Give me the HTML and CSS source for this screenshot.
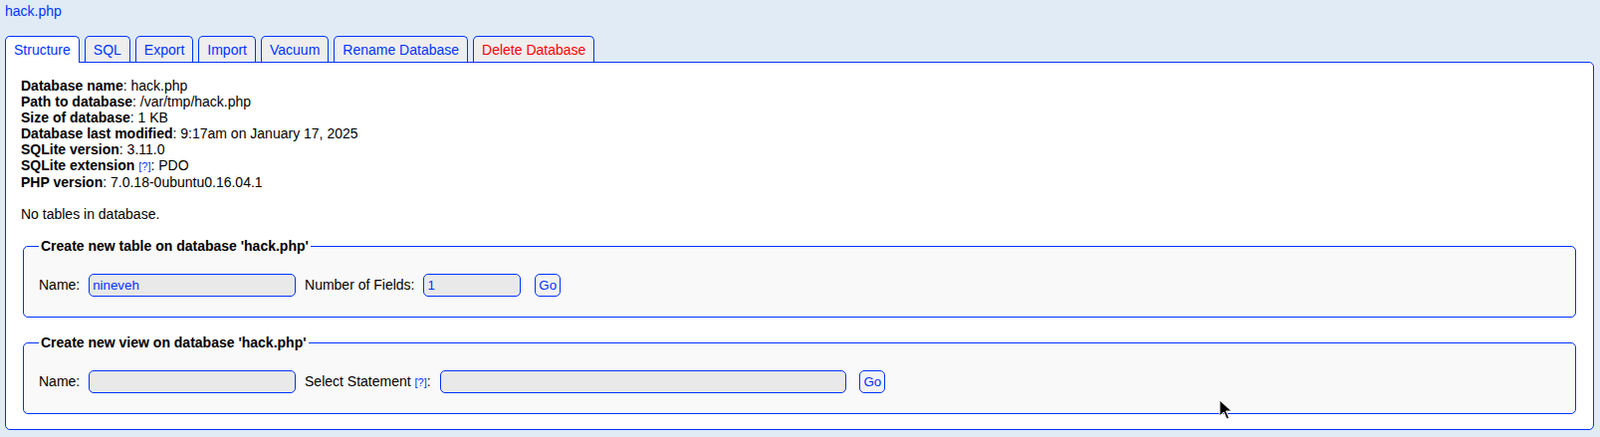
FILE: index.html
```
<!DOCTYPE html>
<html>
<head>
<meta charset="utf-8">
<title>hack.php</title>
<link rel="stylesheet" href="styles.css">
</head>
<body>
<div class="container">
  <div class="header"><a href="#">hack.php</a></div>
  <div class="tabs">
    <a class="tab tab-pressed" href="#">Structure</a>
    <a class="tab" href="#">SQL</a>
    <a class="tab" href="#">Export</a>
    <a class="tab" href="#">Import</a>
    <a class="tab" href="#">Vacuum</a>
    <a class="tab" href="#">Rename Database</a>
    <a class="tab tab-warning" href="#">Delete Database</a>
  </div>
  <div class="main">
    <div class="info">
      <b>Database name</b>: hack.php<br>
      <b>Path to database</b>: /var/tmp/hack.php<br>
      <b>Size of database</b>: 1 KB<br>
      <b>Database last modified</b>: 9:17am on January 17, 2025<br>
      <b>SQLite version</b>: 3.11.0<br>
      <b>SQLite extension</b> <a class="helpq" href="#">[?]</a>: PDO<br>
      <b>PHP version</b>: 7.0.18-0ubuntu0.16.04.1<br>
      <br>
      No tables in database.<br>
      <br>
    </div>
    <fieldset class="box">
      <legend><b>Create new table on database 'hack.php'</b></legend>
      <form class="row">
        Name: <input type="text" class="field w200" value="nineveh"> Number of Fields: <input type="text" class="field w90" value="1"> <input type="submit" class="btn" value="Go">
      </form>
    </fieldset>
    <fieldset class="box box-view">
      <legend><b>Create new view on database 'hack.php'</b></legend>
      <form class="row">
        Name: <input type="text" class="field w200"> Select Statement <a class="helpq" href="#">[?]</a>: <input type="text" class="field w400"> <input type="submit" class="btn" value="Go">
      </form>
    </fieldset>
  </div>
</div>
<svg class="cursor" width="14" height="22" viewBox="0 0 14 22">
  <path d="M1 1 L1 17 L5 13 L8 20 L10.5 19 L7.5 12 L13 12 Z" fill="#000" stroke="#fff" stroke-width="1" stroke-linejoin="round"/>
</svg>
</body>
</html>
```
FILE: styles.css
```
html, body {
  margin: 0;
  padding: 0;
}
body {
  font-family: "Liberation Sans", Arial, Helvetica, sans-serif;
  font-size: 14px;
  line-height: 16px;
  color: #000;
  background-color: #e0ebf6;
}
a {
  color: #03f;
  text-decoration: none;
}
.container {
  padding: 3px 6px 0 5px;
}
.header {
  height: 16px;
}
.tabs {
  display: flex;
  align-items: flex-end;
  margin-top: 17px;
}
.tab {
  display: block;
  padding: 5px 8px 5px 8px;
  margin-right: 5px;
  border: 1px solid #03f;
  border-bottom: none;
  border-radius: 5px 5px 0 0;
  background-color: #eee;
}
.tab-pressed {
  background-color: #fff;
  position: relative;
  z-index: 2;
}
.tab-warning {
  color: #f00;
}
.main {
  position: relative;
  z-index: 1;
  margin-top: -1px;
  border: 1px solid #03f;
  border-radius: 0 5px 5px 5px;
  background-color: #fff;
  padding: 15px;
}
.helpq {
  font-size: 11px;
  font-weight: normal;
}
.box {
  margin: 0 2px;
  padding: 15px;
  border: 1px solid #03f;
  border-radius: 5px;
  background-color: #f9f9f9;
}
.box-view {
  margin-top: 17px;
}
.box legend {
  padding: 0 2px;
}
.row {
  margin: 0;
}
.field, .btn {
  font-family: "Liberation Sans", Arial, Helvetica, sans-serif;
  font-size: 13.333px;
  line-height: 15px;
  color: #03f;
  background-color: #e9e9e9;
  border: 1px solid #03f;
  border-radius: 5px;
  margin: 5px;
  padding: 3px;
  vertical-align: baseline;
}
.btn {
  background-color: #f3f3f3;
}
.w200 { width: 200px; }
.w90 { width: 90px; }
.w400 { width: 400px; }
.cursor {
  position: absolute;
  z-index: 10;
  left: 1224px;
  top: 401px;
}
```
